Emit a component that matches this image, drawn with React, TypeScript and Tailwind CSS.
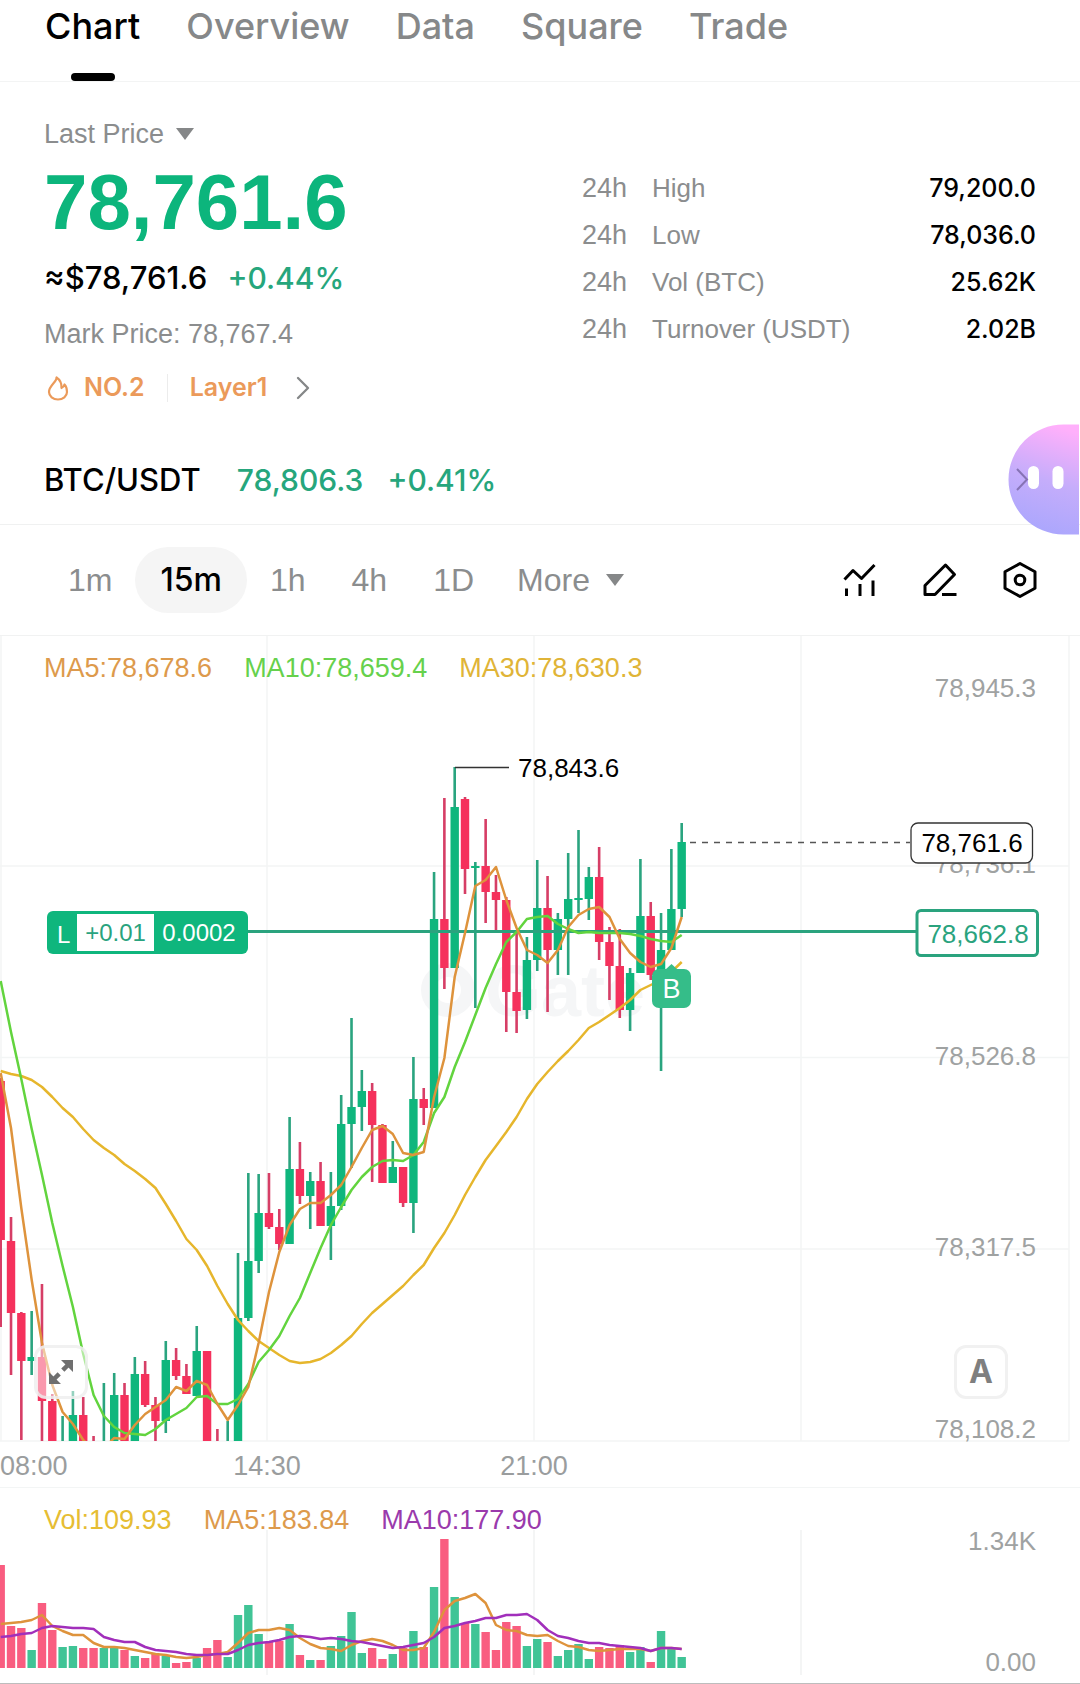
import { ChevronRight } from "lucide-react"

type Candle = [dir: "g" | "r", high: number, top: number, bottom: number, low: number]

const STEP = 10.318
const FLOOR = 1441

// [direction, high, body top, body bottom, low] on the chart's y axis
const candles: Candle[] = [
  ["r", 1078, 1081, 1240, 1327], ["r", 1217, 1241, 1313, 1375], ["r", 1312, 1313, 1361, 1440],
  ["g", 1311, 1357, 1361, 1375], ["r", 1284, 1357, 1401, 1441], ["r", 1394, 1401, 1441, 1441],
  ["g", 1416, 1441, 1441, 1441], ["g", 1391, 1415, 1441, 1441], ["r", 1397, 1415, 1441, 1441],
  ["r", 1436, 1441, 1441, 1441], ["g", 1383, 1441, 1441, 1441], ["g", 1373, 1395, 1441, 1441],
  ["r", 1383, 1395, 1441, 1441], ["g", 1357, 1374, 1441, 1441], ["r", 1361, 1374, 1405, 1407],
  ["r", 1397, 1405, 1421, 1441], ["g", 1341, 1360, 1421, 1433], ["r", 1348, 1360, 1376, 1380],
  ["r", 1364, 1376, 1394, 1394], ["g", 1326, 1351, 1396, 1396], ["r", 1351, 1351, 1441, 1441],
  ["r", 1429, 1441, 1441, 1441], ["g", 1421, 1441, 1441, 1441], ["g", 1253, 1318, 1441, 1441],
  ["g", 1173, 1261, 1318, 1321], ["g", 1174, 1213, 1261, 1273], ["r", 1173, 1213, 1227, 1229],
  ["r", 1209, 1227, 1244, 1250], ["g", 1117, 1169, 1244, 1244], ["r", 1142, 1169, 1196, 1204],
  ["g", 1172, 1181, 1196, 1229], ["r", 1162, 1181, 1226, 1226], ["g", 1172, 1206, 1226, 1260],
  ["g", 1095, 1124, 1206, 1210], ["g", 1018, 1107, 1124, 1168], ["g", 1070, 1091, 1107, 1131],
  ["r", 1083, 1091, 1125, 1182], ["r", 1124, 1125, 1183, 1183], ["g", 1141, 1167, 1183, 1183],
  ["r", 1167, 1167, 1203, 1207], ["g", 1057, 1099, 1203, 1233], ["r", 1088, 1099, 1108, 1125],
  ["g", 872, 919, 1108, 1108], ["r", 798, 919, 968, 989], ["g", 767, 807, 968, 968],
  ["r", 797, 799, 869, 894], ["g", 862, 866, 868, 1008], ["r", 819, 866, 892, 923],
  ["r", 875, 892, 900, 930], ["r", 897, 900, 992, 1032], ["r", 932, 992, 1011, 1033],
  ["g", 937, 960, 1010, 1019], ["g", 860, 908, 960, 971], ["r", 876, 908, 950, 1012],
  ["g", 913, 919, 950, 975], ["g", 853, 899, 919, 975], ["g", 830, 898, 900, 913],
  ["g", 867, 877, 899, 920], ["r", 847, 877, 942, 960], ["r", 927, 942, 966, 1000],
  ["r", 929, 966, 1010, 1018], ["g", 968, 973, 1010, 1031], ["g", 859, 916, 973, 973],
  ["r", 902, 916, 975, 980], ["g", 913, 950, 973, 1071], ["g", 849, 909, 950, 950],
  ["g", 823, 842, 909, 917],
]

const ma5 = [
  1073, 1128, 1208, 1280, 1343, 1385, 1412, 1424, 1440, 1450, 1448, 1438, 1439, 1425, 1414, 1407, 1400, 1387, 1391,
  1381, 1385, 1404, 1420, 1405, 1387, 1343, 1292, 1252, 1225, 1209, 1203, 1203, 1195, 1185, 1167, 1148, 1130, 1126,
  1134, 1153, 1155, 1152, 1097, 1058, 977, 933, 886, 880, 867, 900, 928, 950, 955, 963, 950, 927, 915, 909, 907, 917,
  939, 953, 962, 967, 964, 948, 917,
]

const ma10 = [
  981, 1032, 1079, 1129, 1175, 1223, 1266, 1307, 1354, 1395, 1416, 1427, 1433, 1434, 1435, 1429, 1420, 1414, 1408,
  1397, 1396, 1404, 1404, 1399, 1384, 1362, 1350, 1336, 1316, 1298, 1273, 1248, 1225, 1207, 1190, 1177, 1167, 1161,
  1160, 1161, 1155, 1142, 1113, 1097, 1067, 1042, 1015, 988, 964, 942, 932, 919, 917, 916, 924, 929, 933, 932, 933,
  933, 933, 934, 936, 939, 941, 942, 935,
]

const ma30 = [
  1071, 1074, 1076, 1080, 1087, 1097, 1108, 1117, 1129, 1140, 1148, 1155, 1164, 1171, 1179, 1188, 1204, 1221, 1239,
  1250, 1266, 1286, 1304, 1320, 1331, 1341, 1348, 1355, 1361, 1363, 1362, 1359, 1353, 1345, 1336, 1324, 1313, 1304,
  1295, 1286, 1275, 1265, 1248, 1233, 1215, 1195, 1177, 1160, 1146, 1132, 1117, 1099, 1084, 1072, 1061, 1051, 1040,
  1028, 1022, 1015, 1008, 1000, 990, 985, 980, 972, 962,
]

const volumes = [
  1565, 1626, 1628, 1650, 1603, 1630, 1647, 1646, 1648, 1648, 1648, 1648, 1650, 1656, 1658, 1654, 1656, 1663, 1662,
  1658, 1648, 1640, 1657, 1615, 1605, 1634, 1642, 1641, 1624, 1655, 1660, 1660, 1646, 1636, 1612, 1653, 1648, 1659,
  1654, 1648, 1631, 1647, 1587, 1539, 1597, 1623, 1624, 1632, 1650, 1622, 1626, 1646, 1639, 1642, 1656, 1650, 1644,
  1659, 1647, 1648, 1645, 1652, 1647, 1662, 1631, 1648, 1657,
]

const volMa5 = [
  1624, 1623, 1622, 1620, 1615, 1626, 1631, 1635, 1635, 1643, 1647, 1647, 1648, 1650, 1652, 1654, 1655, 1657, 1658,
  1657, 1655, 1654, 1652, 1643, 1633, 1630, 1630, 1628, 1630, 1638, 1644, 1648, 1649, 1651, 1645, 1641, 1639, 1641,
  1645, 1650, 1650, 1648, 1632, 1610, 1601, 1598, 1594, 1603, 1625, 1630, 1631, 1635, 1636, 1635, 1641, 1646, 1647,
  1650, 1651, 1650, 1649, 1649, 1649, 1651, 1648, 1648, 1649,
]

const volMa10 = [
  1637, 1636, 1634, 1633, 1628, 1626, 1627, 1628, 1628, 1629, 1637, 1640, 1642, 1642, 1647, 1650, 1651, 1652, 1654,
  1655, 1655, 1654, 1654, 1650, 1645, 1643, 1642, 1640, 1637, 1636, 1637, 1639, 1638, 1639, 1641, 1642, 1644, 1646,
  1648, 1647, 1645, 1643, 1637, 1628, 1626, 1623, 1621, 1618, 1618, 1615, 1615, 1614, 1620, 1630, 1636, 1638, 1641,
  1643, 1643, 1645, 1646, 1647, 1648, 1651, 1648, 1648, 1649,
]

const tabs = ["Chart", "Overview", "Data", "Square", "Trade"]
const intervals = ["1m", "15m", "1h", "4h", "1D"]

const stats = [
  { label: "High", value: "79,200.0" },
  { label: "Low", value: "78,036.0" },
  { label: "Vol (BTC)", value: "25.62K" },
  { label: "Turnover (USDT)", value: "2.02B" },
]

const priceLabels = [
  { y: 697, text: "78,945.3" },
  { y: 873, text: "78,736.1" },
  { y: 1065, text: "78,526.8" },
  { y: 1256, text: "78,317.5" },
  { y: 1438, text: "78,108.2" },
]

const xAt = (i: number) => 0.7 + i * STEP

const toPoints = (values: number[]) => values.map((y, i) => `${xAt(i).toFixed(1)},${y}`).join(" ")

function Caret() {
  return (
    <svg className="w-[18px] h-3" viewBox="0 0 18 12" fill="#858788">
      <path d="M0 0H18L9 12Z" />
    </svg>
  )
}

function TabBar() {
  return (
    <nav className="flex h-[82px] gap-[46px] border-b border-[#f3f4f4] px-[45px] pt-2">
      {tabs.map((tab, i) => (
        <a
          key={tab}
          href="#"
          className={`relative font-[Inter] text-[36px] leading-9 font-medium ${i === 0 ? "text-black" : "text-[#868889]"}`}
        >
          {tab}
          {i === 0 && <span className="absolute bottom-0 left-1/2 h-2 w-11 -translate-x-1/2 rounded-full bg-black" />}
        </a>
      ))}
    </nav>
  )
}

function Summary() {
  return (
    <section className="grid grid-cols-[1fr_454px] px-11 pt-8">
      <div>
        <button className="flex items-center gap-3 text-[27px] leading-10 text-[#8b8d8e]">
          Last Price
          <Caret />
        </button>
        <p className="mt-1.5 text-[78px] leading-[84px] font-bold text-[#0cb57c]">78,761.6</p>
        <p className="mt-4 flex gap-5 font-[Inter] leading-9 font-medium">
          <span className="text-[31px] text-black">≈$78,761.6</span>
          <span className="text-[30px] text-[#26a67c]">+0.44%</span>
        </p>
        <p className="mt-5 text-[27px] leading-9 text-[#8b8d8e]">Mark Price: 78,767.4</p>
        <div className="mt-4 flex h-10 items-center font-[Inter] text-[25px] font-semibold text-[#eb9a5a]">
          <svg className="mr-3 h-7 w-7" viewBox="0 0 28 28" fill="none" stroke="#eb9a5a" strokeWidth="2.2" strokeLinejoin="round">
            <path d="M12.5 3.5C13 8 5 11.500 5 18a9 7.500 0 0 0 18 0C23 14.500 22 12 20.500 10.500C20 12.500 19 13.500 17.500 14C17.800 9.500 15.500 5.500 12.500 3.500Z" />
          </svg>
          <a href="#">NO.2</a>
          <span className="mx-[22px] h-7 w-px bg-[#ececec]" />
          <a href="#" className="flex items-center gap-4">
            Layer1
            <ChevronRight className="h-10 w-10 text-[#858788]" strokeWidth={1.4} />
          </a>
        </div>
      </div>

      <table className="mt-[50px] h-[188px] w-full self-start">
        <tbody>
          {stats.map((row) => (
            <tr key={row.label} className="h-[47px]">
              <td className="w-[70px] p-0 text-[27px] leading-8 text-[#8b8d8e]">24h</td>
              <th scope="row" className="p-0 text-left text-[26px] leading-8 font-normal text-[#8b8d8e]">
                {row.label}
              </th>
              <td className="p-0 text-right font-[Inter] text-[25px] leading-8 font-medium text-black">{row.value}</td>
            </tr>
          ))}
        </tbody>
      </table>
    </section>
  )
}

function PairRow() {
  return (
    <section className="relative flex border-b border-[#f0f1f1] px-11 pt-[54px] pb-[26px] font-[Inter] text-[31px] leading-9 font-medium">
      <span className="text-black">BTC/USDT</span>
      <span className="ml-9 text-[30px] text-[#26a67c]">78,806.3</span>
      <span className="ml-6 text-[30px] text-[#26a67c]">+0.41%</span>
      {/* Assistant bubble docked to the edge */}
      <button aria-label="Assistant" className="absolute top-4 right-0 z-10">
        <svg className="h-[111px] w-[72px]" viewBox="0 0 72 111" fill="none">
          <defs>
            <linearGradient id="bubble" x1="0.6" y1="0" x2="0.4" y2="1">
              <stop offset="0" stopColor="#ffb0fb" />
              <stop offset="0.5" stopColor="#c5adfb" />
              <stop offset="1" stopColor="#a9a6fd" />
            </linearGradient>
          </defs>
          <path d="M71 0.500H55.500A55 55 0 0 0 55.500 110.500H71Z" fill="url(#bubble)" />
          <rect x="20" y="42" width="11" height="23" rx="5.500" fill="white" />
          <rect x="44.500" y="42" width="11" height="23" rx="5.500" fill="white" />
          <path d="M9 45L19 55.500L9 66" stroke="#8673b5" strokeWidth="2" />
        </svg>
      </button>
    </section>
  )
}

function Toolbar() {
  return (
    <div className="flex h-[110px] items-center justify-between pr-[42px] pl-[45px]">
      <div className="flex items-center">
        {intervals.map((name) => (
          <button
            key={name}
            className={
              name === "15m"
                ? "h-[66px] rounded-full bg-[#f5f5f5] px-[25px] font-[Inter] text-[32px] font-medium text-black"
                : "px-[23px] text-[32px] text-[#8b8d8e]"
            }
          >
            {name}
          </button>
        ))}
        <button className="flex items-center gap-4 px-5 text-[32px] text-[#8b8d8e]">
          More
          <Caret />
        </button>
      </div>
      <div className="flex gap-11">
        <button aria-label="Indicators">
          <svg className="h-9 w-9" viewBox="0 0 36 36" fill="none" stroke="black" strokeWidth="3">
            <path d="M2.500 17.500L11 8.500L19.500 16.500L32.500 3" strokeLinejoin="round" />
            <path d="M4.500 26.500V34M18 22V34M31 18.500V34" />
          </svg>
        </button>
        <button aria-label="Draw">
          <svg className="h-9 w-9" viewBox="0 0 36 36" fill="none" stroke="black" strokeWidth="3" strokeLinejoin="round">
            <path d="M3 32.500V23.500L23.500 3L32.500 12.500L13 32.500Z" />
            <path d="M20 32.500H34.500" />
          </svg>
        </button>
        <button aria-label="Settings">
          <svg className="h-9 w-9" viewBox="0 0 36 36" fill="none" stroke="black" strokeWidth="3" strokeLinejoin="round">
            <path d="M18 1.500L33 9.700V26.300L18 34.500L3 26.300V9.700Z" />
            <circle cx="18" cy="18" r="4.800" />
          </svg>
        </button>
      </div>
    </div>
  )
}

function PriceChart() {
  return (
    <section className="relative border-t border-[#f1f2f2]">
      <div className="absolute top-4 left-11 flex gap-8 text-[27px] leading-8">
        <span className="text-[#dd9a4c]">MA5:78,678.6</span>
        <span className="text-[#66d14c]">MA10:78,659.4</span>
        <span className="text-[#e0b437]">MA30:78,630.3</span>
      </div>
      <svg className="block w-full" viewBox="0 636 1080 851" fontSize="26">
        <defs>
          <clipPath id="plot">
            <rect x="0" y="636" width="1080" height="805" />
          </clipPath>
        </defs>

        {/* Grid */}
        <g stroke="#f3f5f5" strokeWidth="1.5">
          {[1, 267, 534, 801, 1069].map((x) => (
            <line key={x} x1={x} x2={x} y1="636" y2={FLOOR} />
          ))}
          {[866, 1057.5, 1249, 1441].map((y) => (
            <line key={y} x1="0" x2="1069" y1={y} y2={y} />
          ))}
        </g>

        {/* Watermark */}
        <g fill="#f5f6f7">
          <circle cx="448" cy="990" r="20" fill="none" stroke="#f5f6f7" strokeWidth="14" />
          <text x="485" y="1016" fontSize="72" fontWeight="700">
            Gate
          </text>
        </g>

        <g fill="#9fa2a2" textAnchor="end">
          {priceLabels.map((label) => (
            <text key={label.text} x="1036" y={label.y}>
              {label.text}
            </text>
          ))}
        </g>

        <g clipPath="url(#plot)">
          {candles.map(([dir, high, top, bottom, low], i) => (
            <g key={i}>
              <rect x={xAt(i) - 1.3} y={high} width="2.600" height={low - high} fill={dir === "g" ? "#2aa47f" : "#d63e66"} />
              <rect x={xAt(i) - 4.2} y={top} width="8.400" height={bottom - top} fill={dir === "g" ? "#0fb67d" : "#f5315c"} />
            </g>
          ))}
        </g>

        {/* Position line */}
        <line x1="248" x2="916" y1="931.500" y2="931.500" stroke="#2aa37e" strokeWidth="3" />

        <g clipPath="url(#plot)" fill="none" strokeWidth="2.500" strokeLinejoin="round">
          <polyline points={toPoints(ma30)} stroke="#e6b62c" />
          <polyline points={toPoints(ma10)} stroke="#62d43e" />
          <polyline points={toPoints(ma5)} stroke="#de933c" />
        </g>

        <path d="M455 767.500H509" stroke="#333" strokeWidth="1.500" />
        <text x="518" y="777" fill="black">
          78,843.6
        </text>

        {/* Buy marker */}
        <path d="M665 970L671.500 964L678 970Z" fill="#35bd89" />
        <rect x="652" y="969" width="39" height="39" rx="7" fill="#35bd89" />
        <text x="671.500" y="998" fill="white" fontSize="27" textAnchor="middle">
          B
        </text>

        {/* Last price */}
        <path d="M690 842.500H910" stroke="#555" strokeWidth="1.500" strokeDasharray="6 6" />
        <rect x="911" y="823" width="121.500" height="40" rx="7" fill="white" stroke="#333" strokeWidth="1.300" />
        <text x="972" y="852" fill="black" textAnchor="middle">
          78,761.6
        </text>

        <rect x="917" y="910.500" width="120.500" height="45" rx="4" fill="white" stroke="#2aa37e" strokeWidth="3" />
        <text x="978" y="943" fill="#2aa37e" textAnchor="middle">
          78,662.8
        </text>

        {/* Position tag */}
        <rect x="47" y="911" width="201" height="43" rx="6" fill="#0fb67d" />
        <rect x="77" y="914" width="77" height="37" fill="white" />
        <g fontSize="24" fill="white">
          <text x="57" y="943">
            L
          </text>
          <text x="115.500" y="941" fill="#2aa37e" textAnchor="middle">
            +0.01
          </text>
          <text x="199" y="941" textAnchor="middle">
            0.0002
          </text>
        </g>

        <g fill="#9a9d9e" fontSize="27">
          <text x="0" y="1475">
            08:00
          </text>
          <text x="267" y="1475" textAnchor="middle">
            14:30
          </text>
          <text x="534" y="1475" textAnchor="middle">
            21:00
          </text>
        </g>
      </svg>

      <button
        aria-label="Full screen"
        className="absolute bottom-[88px] left-[34px] flex h-[54px] w-[54px] items-center justify-center rounded-xl border-[3px] border-[#eeeeee]/80 bg-white/50"
      >
        <svg className="h-[26px] w-[26px]" viewBox="0 0 26 26" fill="#6f6f6f" stroke="#6f6f6f">
          <path d="M13 1H25V13ZM13 25H1V13Z" stroke="none" />
          <path d="M20 6L14.800 11.200M6 20L11.200 14.800" strokeWidth="4.500" />
        </svg>
      </button>
      <button
        aria-label="Auto scale"
        className="absolute right-[72px] bottom-[88px] h-[54px] w-[54px] rounded-xl border-[3px] border-[#f1f1f1] bg-white font-[Inter] text-[32px] leading-none font-bold text-[#7f7f7f]"
      >
        A
      </button>
    </section>
  )
}

function VolumeChart() {
  return (
    <section className="relative border-t border-b border-t-[#f3f5f5] border-b-[#bdbdbd]">
      <div className="absolute top-4 left-11 flex gap-8 text-[27px] leading-8">
        <span className="text-[#e6bd33]">Vol:109.93</span>
        <span className="text-[#dd9a4c]">MA5:183.84</span>
        <span className="text-[#9a3aac]">MA10:177.90</span>
      </div>
      <svg className="block w-full" viewBox="0 1488 1080 195" fontSize="26">
        <g stroke="#f0f2f2" strokeWidth="1.500">
          {[267, 534, 801].map((x) => (
            <line key={x} x1={x} x2={x} y1="1530" y2="1675" />
          ))}
        </g>
        {volumes.map((y, i) => (
          <rect
            key={i}
            x={xAt(i) - 4.2}
            y={y}
            width="8.400"
            height={1668 - y}
            fill={candles[i][0] === "g" ? "#40c496" : "#f95d80"}
          />
        ))}
        <g fill="none" strokeWidth="2.500" strokeLinejoin="round">
          <polyline points={toPoints(volMa5)} stroke="#de933c" />
          <polyline points={toPoints(volMa10)} stroke="#a12fbb" />
        </g>
        <g fill="#9fa2a2" textAnchor="end">
          <text x="1036" y="1550">
            1.34K
          </text>
          <text x="1036" y="1671">
            0.00
          </text>
        </g>
      </svg>
    </section>
  )
}

export default function App() {
  return (
    <main className="w-full bg-white font-['Liberation_Sans',Arial,sans-serif]">
      <TabBar />
      <Summary />
      <PairRow />
      <Toolbar />
      <PriceChart />
      <VolumeChart />
    </main>
  )
}
